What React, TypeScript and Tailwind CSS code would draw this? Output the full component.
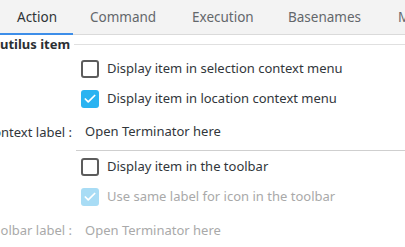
import { Check } from "lucide-react";

const TABS = [
  { name: "Action", w: "w-[73px]" },
  { name: "Command", w: "w-[102px]" },
  { name: "Execution", w: "w-[96px]" },
  { name: "Basenames", w: "w-[110px]" },
  { name: "Mimetypes", w: "w-[110px]" },
];

function Box({ checked, disabled }: { checked?: boolean; disabled?: boolean }) {
  if (checked) {
    return (
      <span
        className={
          "flex h-[18px] w-[18px] shrink-0 items-center justify-center rounded-[3px] " +
          (disabled ? "bg-[#a8dcf5]" : "bg-[#2ab3f1]")
        }
      >
        <Check className="h-[14px] w-[14px] text-white" strokeWidth={3} />
      </span>
    );
  }
  return <span className="h-[18px] w-[18px] shrink-0 rounded-[3px] border-2 border-[#5c5c5c]" />;
}

function CheckRow({ label, checked, disabled, h }: { label: string; checked?: boolean; disabled?: boolean; h: string }) {
  return (
    <div className={"flex items-center gap-2 whitespace-nowrap pl-[81px] " + h}>
      <Box checked={checked} disabled={disabled} />
      <span className={disabled ? "text-[#a9a9a9]" : "text-[#31363b]"}>{label}</span>
    </div>
  );
}

export default function App() {
  return (
    <div className="h-[247px] w-[405px] overflow-hidden bg-white font-['Noto_Sans',sans-serif] text-[13px]">
      {/* ── Tabs ─────────────────────────────────────── */}
      <div className="flex h-[35px] border-b border-[#dadada] bg-[#f3f3f3] whitespace-nowrap text-[13.5px]">
        {TABS.map((t, i) => (
          <div
            key={t.name}
            className={
              "relative flex shrink-0 items-center pl-[17px] " +
              t.w +
              (i === 0 ? " pl-[15px] text-[#2f3337]" : " text-[#63676b]")
            }
          >
            {t.name}
            {i === 0 && <span className="absolute bottom-[-1px] left-0 right-0 h-[2px] bg-[#3d8ee9]" />}
          </div>
        ))}
      </div>

      {/* ── Group title ─────────────────────────────── */}
      <div className="flex h-[19px] items-center">
        <span className="whitespace-nowrap font-bold text-[#2b2f33]">utilus item</span>
        <span className="ml-[4px] h-px flex-1 bg-[#e0e0e0]" />
      </div>

      <CheckRow h="h-[30px]" label="Display item in selection context menu" />
      <CheckRow h="h-[30px]" label="Display item in location context menu" checked />

      <div className="flex h-[37px] whitespace-nowrap">
        <span className="flex w-[76px] shrink-0 items-center justify-end pr-[4px] text-[#31363b]">ontext label :</span>
        <span className="flex flex-1 items-center border-b border-[#cfcfcf] pl-[9px] text-[#31363b]">
          Open Terminator here
        </span>
      </div>

      <CheckRow h="h-[31px]" label="Display item in the toolbar" />
      <CheckRow h="h-[30px]" label="Use same label for icon in the toolbar" checked disabled />

      <div className="flex h-[38px] whitespace-nowrap text-[#a9a9a9]">
        <span className="flex w-[76px] shrink-0 items-center justify-end pr-[4px]">olbar label :</span>
        <span className="flex flex-1 items-center pl-[9px]">Open Terminator here</span>
      </div>
    </div>
  );
}
